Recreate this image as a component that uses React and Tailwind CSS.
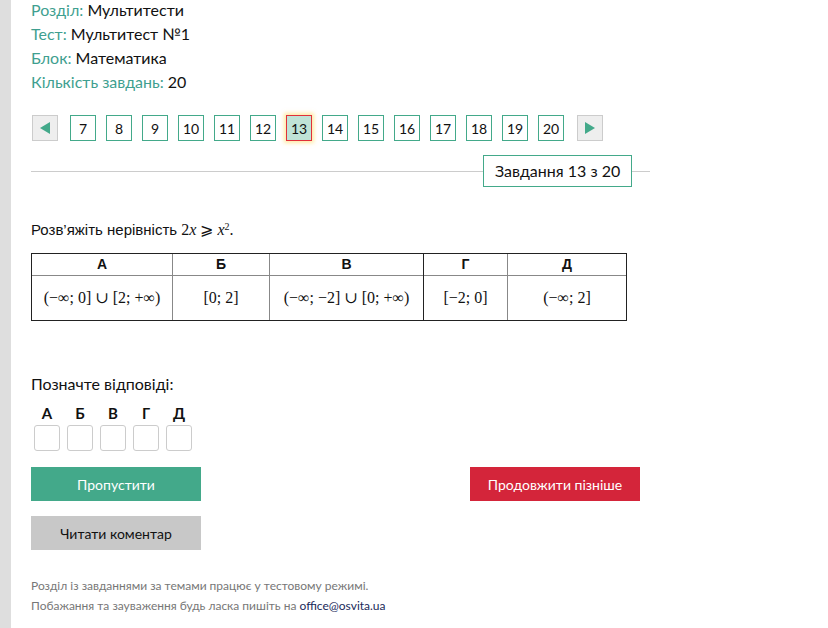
import React from "react";

const gothic = { fontFamily: "Lato, 'Noto Sans', sans-serif" };

function Info({ label, value }) {
  return (
    <div className="h-[24px] leading-[24px]">
      <span className="text-[#3f9f90]">{label}: </span>
      <span className="text-[#111]">{value}</span>
    </div>
  );
}

function Arrow({ dir }) {
  return (
    <div className="w-[26px] h-[26px] bg-[#eeeeee] border border-[#cccccc] flex items-center justify-center">
      <svg width="12" height="14" viewBox="0 0 12 14">
        {dir === "left" ? (
          <polygon points="11,1 11,13 1,7" fill="#43a98a" />
        ) : (
          <polygon points="1,1 1,13 11,7" fill="#43a98a" />
        )}
      </svg>
    </div>
  );
}

function M({ children }) {
  return <span style={{ fontFamily: "'Liberation Serif', 'DejaVu Serif', serif" }}>{children}</span>;
}

export default function App() {
  const pages = [7, 8, 9, 10, 11, 12, 13, 14, 15, 16, 17, 18, 19, 20];
  const cols = [
    { h: "А", w: "w-[141px]", v: <M>(−∞; 0] ∪ [2; +∞)</M> },
    { h: "Б", w: "w-[97px]", v: <M>[0; 2]</M> },
    { h: "В", w: "w-[154px]", v: <M>(−∞; −2] ∪ [0; +∞)</M> },
    { h: "Г", w: "w-[84px]", v: <M>[−2; 0]</M> },
    { h: "Д", w: "flex-1", v: <M>(−∞; 2]</M> },
  ];
  const letters = ["А", "Б", "В", "Г", "Д"];

  return (
    <div className="flex min-h-[628px] bg-white" style={gothic}>
      <div className="w-[11px] bg-[#dedede] shrink-0" />
      <div className="pl-[20px] flex flex-col w-[640px]">
        <div className="text-[16px] -mt-[2px]">
          <Info label="Розділ" value="Мультитести" />
          <Info label="Тест" value="Мультитест №1" />
          <Info label="Блок" value="Математика" />
          <Info label="Кількість завдань" value="20" />
        </div>

        <div className="flex items-center mt-[21px] pl-[1px]">
          <Arrow dir="left" />
          <div className="flex gap-[10px] ml-[12px]">
            {pages.map((p) =>
              p === 13 ? (
                <div
                  key={p}
                  className="w-[26px] h-[26px] bg-[#bfe3d6] border border-[#e0303a] flex items-center justify-center text-[14px] text-[#111] shadow-[0_0_4px_2px_rgba(255,215,90,0.55)]"
                >
                  {p}
                </div>
              ) : (
                <div
                  key={p}
                  className="w-[26px] h-[26px] border border-[#43a98a] flex items-center justify-center text-[14px] text-[#111]"
                >
                  {p}
                </div>
              )
            )}
          </div>
          <div className="ml-[13px]">
            <Arrow dir="right" />
          </div>
        </div>

        <div className="relative mt-[14px] h-[32px] flex items-center w-[619px]">
          <div className="absolute left-0 right-0 top-[16px] h-px bg-[#cccccc]" />
          <div className="relative ml-[452px] h-[32px] px-[11px] border border-[#43a98a] bg-white flex items-center text-[16px] text-[#111]">
            Завдання 13 з 20
          </div>
        </div>

        <div
          className="mt-[33px] text-[15px] text-[#111] h-[20px] leading-[20px]"
          style={{ fontFamily: "'Liberation Sans', Arial, sans-serif" }}
        >
          Розв’яжіть нерівність{" "}
          <span className="text-[16px]">
            <M>
              2<i>x</i> ⩾ <i>x</i>
              <sup className="text-[10px]">2</sup>.
            </M>
          </span>
        </div>

        <div
          className="mt-[13px] w-[596px] border border-[#222] flex"
          style={{ fontFamily: "'Liberation Sans', Arial, sans-serif" }}
        >
          {cols.map((c, i) => (
            <div
              key={c.h}
              className={`${c.w} flex flex-col ${i < 4 ? "border-r border-[#888]" : ""} ${i === 2 ? "border-r-[#222]" : ""}`}
            >
              <div className="h-[22px] border-b border-[#888] flex items-center justify-center text-[14px] font-bold text-[#111]">
                {c.h}
              </div>
              <div className="h-[44px] flex items-center justify-center text-[16px] text-[#111]">{c.v}</div>
            </div>
          ))}
        </div>

        <div className="mt-[52px] text-[16px] text-[#111] h-[22px] leading-[22px]">Позначте відповіді:</div>
        <div className="flex gap-[7px] ml-[3px] mt-[9px]">
          {letters.map((l) => (
            <div key={l} className="flex flex-col items-center w-[26px]">
              <div className="text-[15px] font-bold text-[#111] leading-[18px]">{l}</div>
              <div className="mt-[3px] w-[26px] h-[26px] border border-[#cccccc] rounded-[3px]" />
            </div>
          ))}
        </div>

        <div className="mt-[16px] flex justify-between w-[609px]">
          <button className="w-[170px] h-[34px] bg-[#43a98a] text-white text-[14px]">Пропустити</button>
          <button className="w-[170px] h-[34px] bg-[#d4253a] text-white text-[14px]">Продовжити пізніше</button>
        </div>
        <button className="mt-[15px] w-[170px] h-[34px] bg-[#c8c8c8] text-[#111] text-[14px]">Читати коментар</button>

        <div className="mt-[26px] text-[12px] text-[#777] leading-[20px]">
          <div>Розділ із завданнями за темами працює у тестовому режимі.</div>
          <div>
            Побажання та зауваження будь ласка пишіть на <span className="text-[#1a2a5a]">office@osvita.ua</span>
          </div>
        </div>
      </div>
    </div>
  );
}
